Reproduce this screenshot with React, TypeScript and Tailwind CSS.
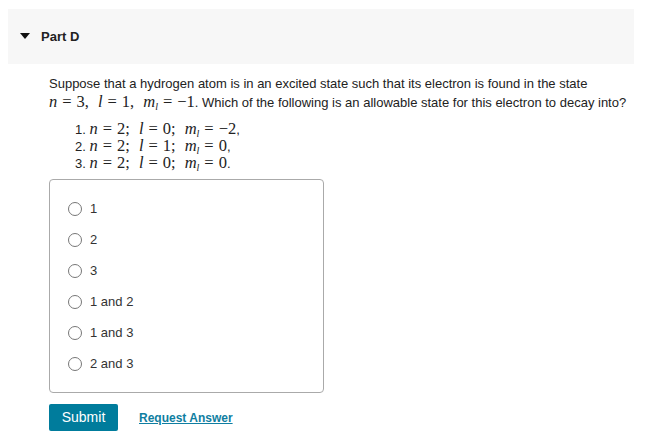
import type { ReactNode } from "react";

function M({ children }: { children: ReactNode }) {
  return <span className="font-['Liberation_Serif',serif] text-[16.5px] leading-none">{children}</span>;
}

function V({ children }: { children: ReactNode }) {
  return <i>{children}</i>;
}

function Eq() {
  return <span className="mx-[5px] inline-block">=</span>;
}

function Gap() {
  return <span className="inline-block w-[9px]" />;
}

function Ml() {
  return (
    <>
      <i>m</i>
      <span className="relative top-[3px] text-[10px] italic">l</span>
    </>
  );
}

const choices = ["1", "2", "3", "1 and 2", "1 and 3", "2 and 3"];

const states: [string, string, string, string][] = [
  ["2", "0", "−2", ","],
  ["2", "1", "0", ","],
  ["2", "0", "0", "."],
];

export default function App() {
  return (
    <div className="min-h-[446px] w-[645px] bg-white pt-[9px] font-['Liberation_Sans',Arial,sans-serif] text-[#222]">
      <div className="mx-[8px] flex h-[55px] w-[626px] items-center bg-[#f7f7f7] pl-[12px]">
        <svg width="10" height="7" viewBox="0 0 10 7" className="mb-[1px]">
          <path d="M0 0h10L5 6z" fill="#111" />
        </svg>
        <span className="ml-[11px] text-[13px] font-bold text-[#222]">Part D</span>
      </div>

      <div className="pl-[49px] pr-[2px] pt-[10px]">
        <p className="text-[13px] leading-[19px]">
          Suppose that a hydrogen atom is in an excited state such that its electron is found in the state
          <br />
          <M>
            <V>n</V>
            <Eq />
            3,
            <Gap />
            <V>l</V>
            <Eq />
            1,
            <Gap />
            <Ml />
            <Eq />
            −1
          </M>
          . Which of the following is an allowable state for this electron to decay into?
        </p>

        <ol className="mt-[9px] pl-[26px] text-[13px] leading-[16px]">
          {states.map(([n, l, m, end], i) => (
            <li key={i}>
              {i + 1}.{" "}
              <M>
                <V>n</V>
                <Eq />
                {n};
                <Gap />
                <V>l</V>
                <Eq />
                {l};
                <Gap />
                <Ml />
                <Eq />
                {m}
              </M>
              {end}
            </li>
          ))}
        </ol>

        <div className="mt-[7px] flex h-[214px] w-[275px] flex-col gap-[13px] rounded-[4px] border border-[#aaa] pl-[18px] pt-[20px]">
          {choices.map((c) => (
            <label key={c} className="flex h-[18px] items-center text-[13px] text-[#333]">
              <span className="h-[14px] w-[14px] rounded-full border border-[#777] bg-white" />
              <span className="ml-[8px]">{c}</span>
            </label>
          ))}
        </div>

        <div className="mt-[11px] flex items-center">
          <button className="h-[27px] w-[69px] rounded-[2px] bg-[#007c9c] text-[14px] text-white">Submit</button>
          <a className="ml-[21px] text-[12px] font-bold text-[#0f7ea1] underline">Request Answer</a>
        </div>
      </div>
    </div>
  );
}
